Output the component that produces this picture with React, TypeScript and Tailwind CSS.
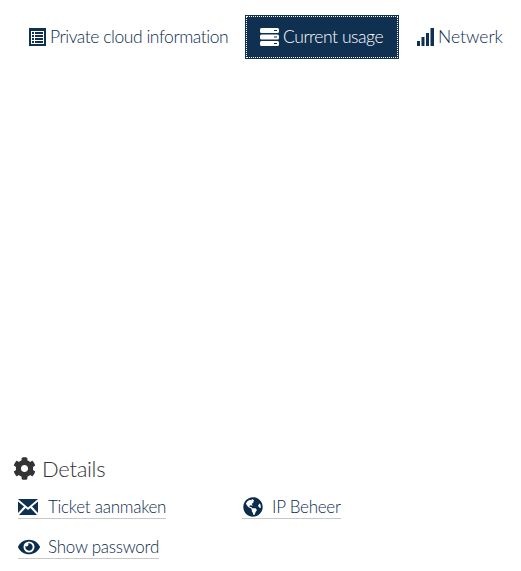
import React from "react";
import { FaCog, FaEye, FaGlobeAmericas } from "react-icons/fa";

const ListIcon = () => (
  <svg width="17" height="18" viewBox="0 0 17 18" className="shrink-0">
    <path fill="#0f3050" fillRule="evenodd" d="M0 0h17v18H0zM2 3v13h13V3z" />
    <path
      fill="#0f3050"
      d="M3 4h2v2H3zM6 4h8v2H6zM3 7h2v2H3zM6 7h8v2H6zM3 10h2v2H3zM6 10h8v2H6zM3 13h2v2H3zM6 13h8v2H6z"
    />
  </svg>
);

const ServerIcon = () => (
  <svg width="19" height="18" viewBox="0 0 19 18" className="shrink-0">
    <path
      fill="currentColor"
      fillRule="evenodd"
      d="M1.5 0h16A1.5 1.5 0 0 1 19 1.5v2A1.5 1.5 0 0 1 17.500 5h-16A1.500 1.500 0 0 1 0 3.500v-2A1.500 1.500 0 0 1 1.500 0zM14 2v1h3V2zM1.500 6.500h16A1.500 1.500 0 0 1 19 8v2a1.500 1.500 0 0 1-1.500 1.500h-16A1.500 1.500 0 0 1 0 10V8a1.500 1.500 0 0 1 1.500-1.500zM14 8.500v1h3v-1zM1.500 13h16a1.500 1.500 0 0 1 1.500 1.500v2a1.500 1.500 0 0 1-1.500 1.500h-16A1.500 1.500 0 0 1 0 16.500v-2A1.500 1.500 0 0 1 1.500 13zM14 15v1h3v-1z"
    />
  </svg>
);

const SignalIcon = () => (
  <svg width="17" height="18" viewBox="0 0 17 18" className="shrink-0">
    <path fill="#0f3050" d="M0 13h3v5H0zM4.500 9h3v9h-3zM9 5h3v13H9zM13.500 0H17v18h-3.500z" />
  </svg>
);

const MailIcon = () => (
  <svg width="20" height="16" viewBox="0 0 20 16" className="shrink-0">
    <path fill="#0f3050" d="M0 0h20L10 8.500zM0 2.500l6 5-6 6.500zM20 2.500l-6 5 6 6.500zM1 16l6.600-7L10 11l2.400-2L19 16z" />
  </svg>
);

const tabs = [
  { label: "Private cloud information", icon: <ListIcon />, active: false, text: "tracking-[-0.45px]" },
  { label: "Current usage", icon: <ServerIcon />, active: true, text: "tracking-[-0.45px]" },
  { label: "Netwerk", icon: <SignalIcon />, active: false, text: "tracking-[0px]" },
];

const links = [
  { label: "Ticket aanmaken", icon: <MailIcon />, box: "w-[148px]" },
  { label: "IP Beheer", icon: <FaGlobeAmericas size={20} className="ml-px" />, box: "w-[99px]" },
  { label: "Show password", icon: <FaEye size={22} />, box: "w-[141px]" },
];

export default function App() {
  return (
    <div className="h-[571px] w-[521px] overflow-hidden bg-white font-['Lato',sans-serif] text-[#0c2c4c]">
      {/* Tabs */}
      <div className="flex items-center pt-[15px] pl-[29px]">
        {tabs.map((tab) => (
          <div
            key={tab.label}
            className={
              tab.active
                ? "ml-[17px] flex h-[44px] w-[154px] items-center gap-[4px] bg-[#0f3050] pl-[15px] text-white outline-1 -outline-offset-2 outline-white outline-dotted"
                : "flex h-[44px] items-center gap-[4px] first:w-[199px] last:ml-[18px]"
            }
          >
            {tab.icon}
            <span className={`text-[17.5px] font-light whitespace-nowrap ${tab.text}`}>
              {tab.label}
            </span>
          </div>
        ))}
      </div>

      {/* Details */}
      <div className="mt-[397px] pl-[13px]">
        <div className="flex h-[24px] items-center gap-[6px] text-[#333333]">
          <FaCog size={23} />
          <span className="text-[22px] font-light tracking-[-0.3px]">Details</span>
        </div>
        <div className="mt-[15px] grid w-[400px] grid-cols-[224px_1fr] gap-y-[16px] pl-[5px]">
          {links.map((link) => (
            <div
              key={link.label}
              className={`flex h-[24px] items-center border-b border-[#c8c8c8] ${link.box}`}
            >
              <span className="flex w-[30px] shrink-0 items-center">{link.icon}</span>
              <span className="text-[17px] font-light tracking-[-0.25px] whitespace-nowrap">
                {link.label}
              </span>
            </div>
          ))}
        </div>
      </div>
    </div>
  );
}
